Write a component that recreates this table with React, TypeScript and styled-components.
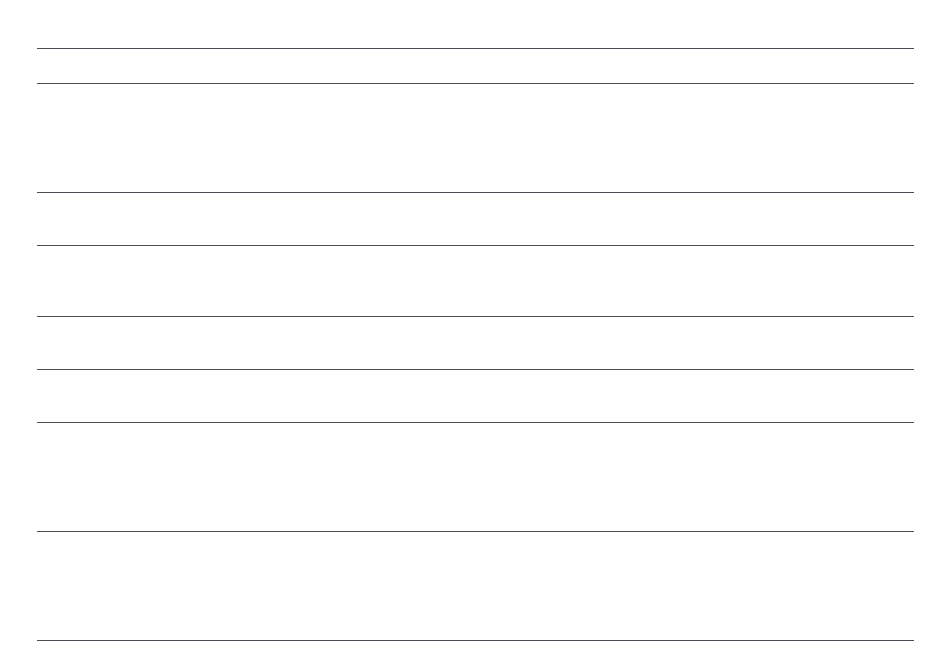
import React from "react";
import styled, { createGlobalStyle } from "styled-components";

const GlobalStyle = createGlobalStyle`
  html, body {
    margin: 0;
    padding: 0;
    background: #ffffff;
    font-family: "Liberation Sans", Arial, sans-serif;
  }
`;

const Page = styled.div`
  width: 877px;
  margin: 0 auto;
  padding-top: 48px;
  display: flex;
  flex-direction: column;
`;

const Row = styled.div<{ $h: number }>`
  box-sizing: border-box;
  height: ${(p) => p.$h}px;
  border-top: 1px solid #4b4f58;
  &:last-child {
    height: ${(p) => p.$h + 1}px;
    border-bottom: 1px solid #4b4f58;
  }
`;

const rows = [35, 109, 53, 71, 53, 53, 109, 109];

export default function App() {
  return (
    <>
      <GlobalStyle />
      <Page>
        {rows.map((h, i) => (
          <Row key={i} $h={h} />
        ))}
      </Page>
    </>
  );
}
